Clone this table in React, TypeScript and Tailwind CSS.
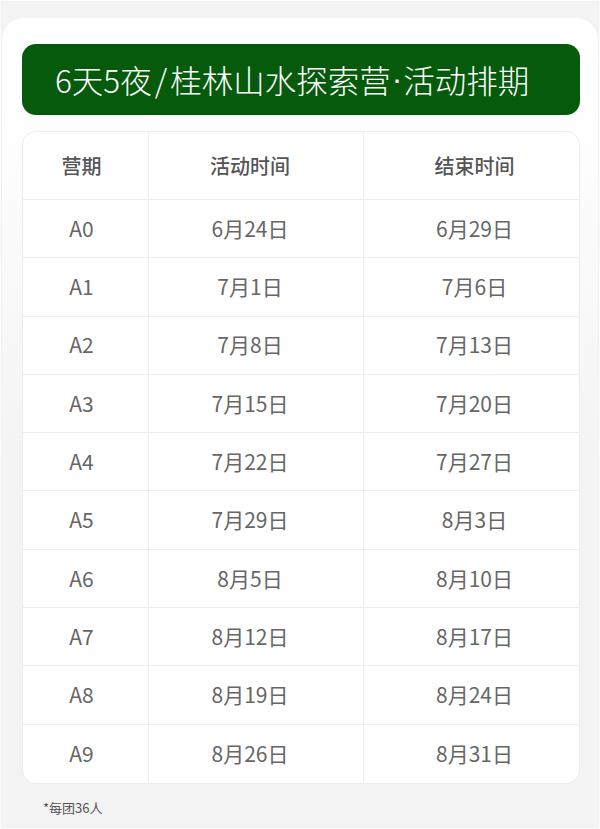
import React from "react";

const rows: [string, string, string][] = [
  ["A0", "6月24日", "6月29日"],
  ["A1", "7月1日", "7月6日"],
  ["A2", "7月8日", "7月13日"],
  ["A3", "7月15日", "7月20日"],
  ["A4", "7月22日", "7月27日"],
  ["A5", "7月29日", "8月3日"],
  ["A6", "8月5日", "8月10日"],
  ["A7", "8月12日", "8月17日"],
  ["A8", "8月19日", "8月24日"],
  ["A9", "8月26日", "8月31日"],
];

export default function App() {
  return (
    <div
      className="w-[600px] h-[829px] bg-[#f3f3f3] border border-[#fbfbfb] pt-[17px] px-px overflow-hidden"
      style={{ fontFamily: '"Noto Sans CJK SC", "Noto Sans", sans-serif' }}
    >
      <div className="h-full rounded-t-[22px] bg-[linear-gradient(to_bottom,#ffffff_0px,#ffffff_80px,#f3f3f3_470px)] pt-[26px] pl-[20px] pr-[18px]">
        <div className="h-[71px] rounded-[14px] bg-[#065a0b] flex items-center pl-[33px] text-white text-[31.5px] font-light leading-none">
          <span>6天5夜</span>
          <span className="px-[3px]">/</span>
          <span>桂林山水探索营</span>
          <span className="px-[1px] font-['Liberation_Sans',sans-serif]">·</span>
          <span>活动排期</span>
        </div>
        <div className="mt-[16px] bg-white rounded-[14px] border border-[#ececec] overflow-hidden">
          <div className="grid grid-cols-[125px_215px_1fr] h-[68px] border-b border-[#ececec] text-[20px] font-medium text-[#555555]">
            <div className="flex items-center justify-center pr-[8px]">营期</div>
            <div className="flex items-center justify-center border-l border-[#ececec] pr-[12px]">活动时间</div>
            <div className="flex items-center justify-center border-l border-[#ececec] pl-[6px]">结束时间</div>
          </div>
          {rows.map((r, i) => (
            <div
              key={r[0]}
              className={
                "grid grid-cols-[125px_215px_1fr] h-[58.3px] text-[21px] text-[#666666] " +
                (i < rows.length - 1 ? "border-b border-[#ececec]" : "")
              }
            >
              <div className="flex items-center justify-center pr-[8px]">{r[0]}</div>
              <div className="flex items-center justify-center border-l border-[#ececec] pr-[12px]">{r[1]}</div>
              <div className="flex items-center justify-center border-l border-[#ececec] pl-[6px]">{r[2]}</div>
            </div>
          ))}
        </div>
        <div className="mt-[15px] pl-[21px] text-[13px] leading-[18px] text-[#555555]">*每团36人</div>
      </div>
    </div>
  );
}
